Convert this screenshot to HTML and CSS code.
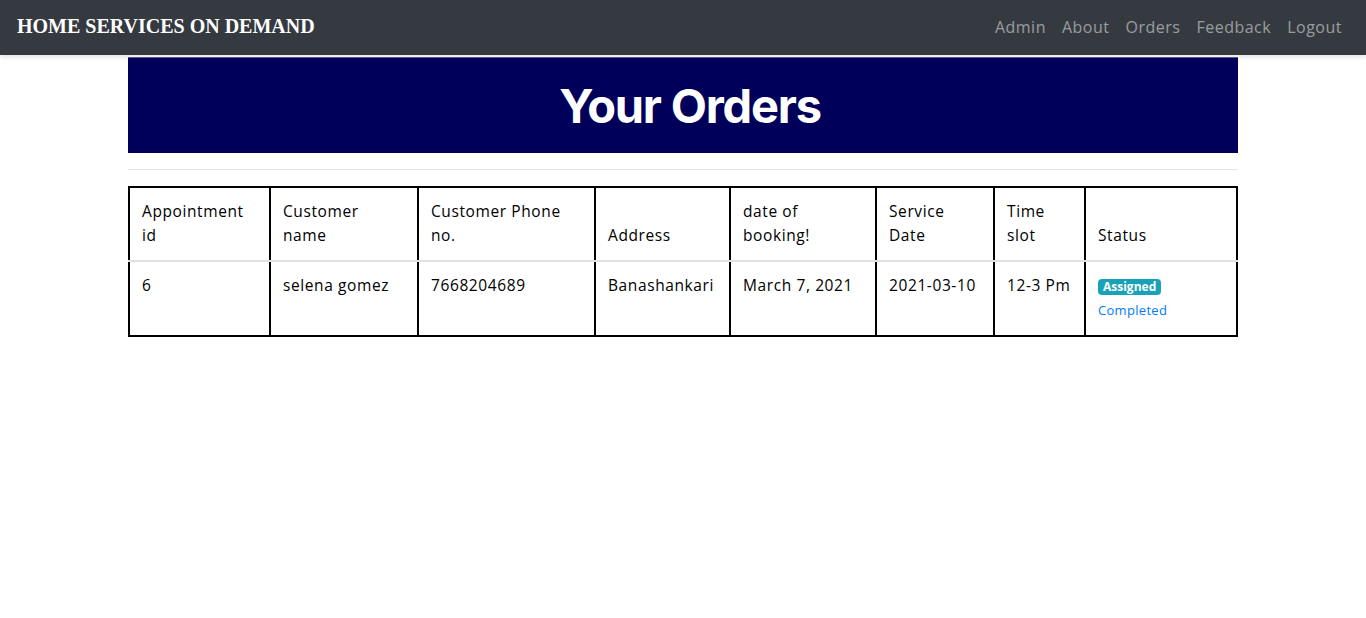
FILE: index.html
```html
<!DOCTYPE html>
<html lang="en">
<head>
<meta charset="utf-8">
<title>Your Orders</title>
<link rel="stylesheet" href="styles.css">
</head>
<body>
<nav class="navbar">
  <a class="brand" href="#">HOME SERVICES ON DEMAND</a>
  <ul class="nav-links">
    <li><a href="#">Admin</a></li>
    <li><a href="#">About</a></li>
    <li><a href="#">Orders</a></li>
    <li><a href="#">Feedback</a></li>
    <li><a href="#">Logout</a></li>
  </ul>
</nav>
<main class="container">
  <div class="banner"><h1>Your Orders</h1></div>
  <hr class="divider">
  <table class="orders">
    <colgroup>
      <col class="c1"><col class="c2"><col class="c3"><col class="c4"><col class="c5"><col class="c6"><col class="c7"><col class="c8">
    </colgroup>
    <thead>
      <tr>
        <th>Appointment id</th>
        <th>Customer name</th>
        <th>Customer Phone no.</th>
        <th>Address</th>
        <th>date of booking!</th>
        <th>Service Date</th>
        <th>Time slot</th>
        <th>Status</th>
      </tr>
    </thead>
    <tbody>
      <tr>
        <td>6</td>
        <td>selena gomez</td>
        <td>7668204689</td>
        <td>Banashankari</td>
        <td>March 7, 2021</td>
        <td>2021-03-10</td>
        <td>12-3 Pm</td>
        <td class="status"><span class="badge">Assigned</span><a class="done" href="#">Completed</a></td>
      </tr>
    </tbody>
  </table>
</main>
</body>
</html>
```
FILE: styles.css
```css
* { box-sizing: border-box; }
body {
  margin: 0;
  font-family: "Open Sans", "Noto Sans", sans-serif;
  font-size: 16px;
  color: #000;
  background: #fff;
}
a { text-decoration: none; }
.navbar {
  height: 55px;
  background: #343a40;
  display: flex;
  align-items: center;
  justify-content: space-between;
  padding: 0 16px 2px 17px;
  box-shadow: 0 2px 5px rgba(0,0,0,0.12);
  position: relative;
  z-index: 1;
}
.brand {
  font-family: "Liberation Serif", "DejaVu Serif", serif;
  font-weight: bold;
  font-size: 20px;
  color: #fff;
  letter-spacing: 0;
}
.nav-links {
  list-style: none;
  margin: 0;
  padding: 0;
  display: flex;
}
.nav-links a {
  display: block;
  padding: 8px 8px;
  color: rgba(255,255,255,0.5);
  font-size: 16px;
  letter-spacing: 0.5px;
}
.container {
  width: 1110px;
  margin: 0 auto;
}
.banner {
  margin-top: 2px;
  height: 96px;
  background: #00005a;
  display: flex;
  align-items: center;
  justify-content: center;
  border-top: 1px solid #5a5a9a;
  padding-left: 14px;
}
.banner h1 {
  margin: 0;
  color: #fff;
  font-family: "Inter", "Noto Sans", sans-serif;
  font-weight: 700;
  font-size: 47px;
  letter-spacing: -1.2px;
}
.divider {
  margin: 16px 0;
  border: 0;
  border-top: 1px solid rgba(0,0,0,0.1);
}
.orders {
  width: 1108px;
  border-collapse: collapse;
  margin-top: 16px;
  table-layout: fixed;
}
.c1 { width: 141px; }
.c2 { width: 148px; }
.c3 { width: 177px; }
.c4 { width: 135px; }
.c5 { width: 146px; }
.c6 { width: 118px; }
.c7 { width: 91px; }
.c8 { width: 152px; }
.orders th, .orders td {
  border: 2px solid #000;
  padding: 12px;
  text-align: left;
  line-height: 24px;
  font-size: 15.5px;
  letter-spacing: 0.6px;
}
.orders th {
  font-weight: normal;
  vertical-align: bottom;
  border-bottom: 2px solid #dee2e6;
  padding-top: 11px;
  padding-bottom: 13px;
}
.orders td {
  vertical-align: top;
  height: 75px;
  border-top: 2px solid #dee2e6;
  padding-top: 11px;
}
.orders td.status {
  padding-top: 16px;
  line-height: 1;
}
.badge {
  display: inline-block;
  background: #17a2b8;
  color: #fff;
  font-size: 12px;
  font-weight: 700;
  padding: 2px 5px;
  border-radius: 4px;
  line-height: 12px;
  letter-spacing: 0;
}
.done {
  display: block;
  margin-top: 9px;
  color: #007bff;
  font-size: 13px;
  letter-spacing: 0.3px;
}
```
